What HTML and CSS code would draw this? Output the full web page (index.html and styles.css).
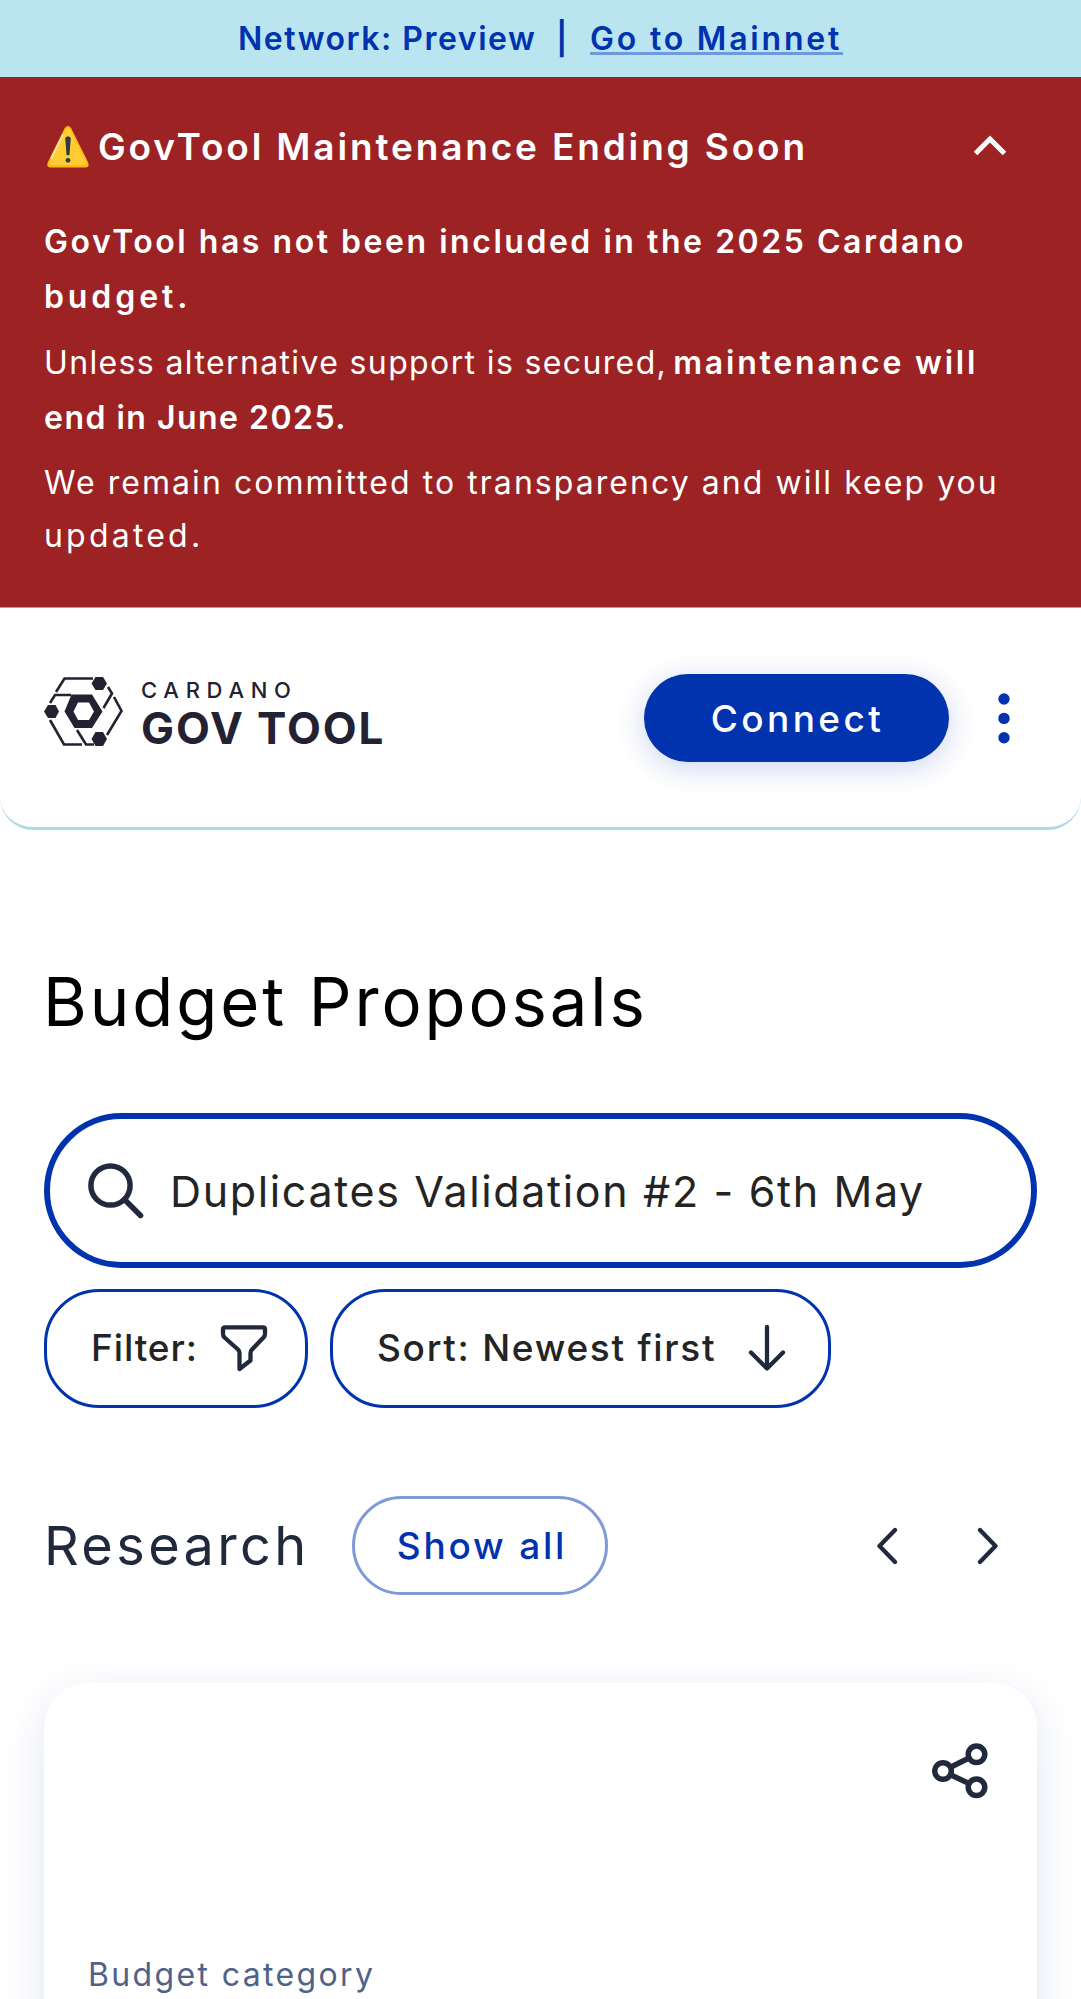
FILE: index.html
```html
<!DOCTYPE html>
<html lang="en">
<head>
<meta charset="utf-8">
<title>GovTool - Budget Proposals</title>
<link rel="stylesheet" href="styles.css">
</head>
<body>
<div class="page">
<div class="network"><span class="network-name">Network: Preview</span><span class="network-sep">|</span><a class="network-link">Go to Mainnet</a></div>
<section class="banner">
  <div class="banner-head">
    <svg class="warn" width="44" height="44" viewBox="0 0 44 44"><path d="M18.600 3.200Q22 -1.400 25.200 3.200L42.200 37.500Q43.800 42.500 39.500 42.500H4.500Q.200 42.500 1.700 37.500Z" fill="#fcb71b"/><path d="M19.600 4.500Q22 1.800 24.200 4.500L40 37Q41 40 38 40H6Q3 40 4 37Z" fill="#ffcd33"/><path d="M5.500 33L17 10" stroke="#ffe58a" stroke-width="2" stroke-linecap="round"/><path d="M19.200 13Q22 9.500 24.800 13L23.500 29.500Q22 31.500 20.500 29.500Z" fill="#2f3a40"/><circle cx="22" cy="35.300" r="2.400" fill="#2f3a40"/></svg>
    <h2 class="banner-title">GovTool Maintenance Ending Soon</h2>
    <svg class="collapse" width="34" height="22" viewBox="0 0 34 22"><path d="M2.500 18.500L17 4L31.500 18.500" fill="none" stroke="#fff" stroke-width="5"/></svg>
  </div>
  <p class="lead"><b class="lead-main">GovTool has not been included in the 2025 Cardano</b><br><b class="lead-end">budget.</b></p>
  <p class="lead"><span class="condition">Unless alternative support is secured,</span> <b class="outcome">maintenance will</b><br><b class="deadline">end in June 2025.</b></p>
  <p class="note">We remain committed to transparency and will keep you<br><span class="note-end">updated.</span></p>
</section>
<header class="header">
  <div class="logo">
    <svg width="79" height="69" viewBox="0 0 79 69" fill="none" stroke="#242232" stroke-width="2.600"><path d="M12 15L20.500 1.500H49M64 10L68 16.500L59.500 31M6 26L11 18H27M70 20L77.500 34L63 58M6 43L20 67.500H38M33 53L42 67.500H50"/><g fill="#242232" stroke="none"><path d="M27.500 17.500H48L58.500 34.500L48 51H30.500L20.500 34.500Z"/><path d="M51.500 0H59L63 6.500L59 13H51.500L47.500 6.500Z"/><path d="M4 28H11.500L15 34.500L11.500 41H4L0 34.500Z"/><path d="M51.500 55H59L63 62L59 69H51.500L47.500 62Z"/></g><path d="M34 25.500H45L50 34.500L45 43H34L29.500 34.500Z" fill="#fff" stroke="none"/></svg>
    <div class="wordmark"><span class="wordmark-top">CARDANO</span><span class="wordmark-main">GOV TOOL</span></div>
  </div>
  <div class="actions">
    <button class="connect">Connect</button>
    <svg width="12" height="51" viewBox="0 0 12 51" fill="#0033ad"><circle cx="6" cy="6" r="5.700"/><circle cx="6" cy="25.400" r="5.700"/><circle cx="6" cy="44.800" r="5.700"/></svg>
  </div>
</header>
<main class="main">
  <h1 class="title">Budget Proposals</h1>
  <div class="search">
    <svg width="56" height="56" viewBox="0 0 56 56" fill="none" stroke="#212a3d" stroke-width="5.500" stroke-linecap="round"><circle cx="22.500" cy="22.500" r="19.600"/><path d="M36.500 36.500L52.500 52.500"/></svg>
    <span>Duplicates Validation #2 - 6th May</span>
  </div>
  <div class="chips">
    <button class="chip filter"><span>Filter:</span>
      <svg width="48" height="48" viewBox="0 0 48 48" fill="none" stroke="#212a3d" stroke-width="4.300" stroke-linejoin="round"><path d="M5 3.300H43Q45 3.300 45 5.300V10Q45 12 43.500 13.500L32 25.500Q30.500 27 30.500 29V36.500L19.500 45V29Q19.500 27 18 25.500L4.500 13.500Q3 12 3 10V5.300Q3 3.300 5 3.300Z"/></svg></button>
    <button class="chip sort"><span>Sort: Newest first</span>
      <svg width="38" height="48" viewBox="0 0 38 48" fill="none" stroke="#212a3d" stroke-width="4.300" stroke-linecap="round" stroke-linejoin="round"><path d="M19 3V44.500M3 28.500L19 44.500L35 28.500"/></svg></button>
  </div>
  <div class="section-head">
    <h2 class="section-title">Research</h2>
    <button class="show-all">Show all</button>
    <div class="pager"><svg width="22" height="38" viewBox="0 0 22 38"><path d="M19 3L3.500 19L19 35"/></svg><svg width="22" height="38" viewBox="0 0 22 38"><path d="M3 3L18.500 19L3 35"/></svg></div>
  </div>
  <article class="card">
    <svg class="share" width="56" height="56" viewBox="0 0 56 56" fill="none" stroke="#212a3d" stroke-width="5.500"><circle cx="11" cy="28" r="8.300"/><circle cx="44.500" cy="11.300" r="8.300"/><circle cx="44.500" cy="44.300" r="8.300"/><path d="M18.500 24.300L37 15M18.500 31.700L37 40.500"/></svg>
    <span class="category">Budget category</span>
  </article>
</main>
</div>
</body>
</html>
```
FILE: styles.css
```css
* { box-sizing: border-box; }
body { margin: 0; background: #fff; font-family: Inter, "Open Sans", sans-serif; color: #212a3d; }
.page { width: 1081px; height: 1999px; overflow: hidden; }
h1, h2, p { margin: 0; font-weight: 400; }
button { font: inherit; margin: 0; padding: 0; background: none; display: flex; align-items: center; }
svg { display: block; flex: none; }
b { font-weight: 600; }

.network { height: 77px; display: flex; align-items: center; padding-left: 238px; background: #bbe4f1; color: #0033ad; font-size: 32px; font-weight: 600; }
.network-name { width: 318px; white-space: nowrap; letter-spacing: 1.52px; }
.network-sep { width: 34px; }
.network-link { width: 253px; line-height: 27px; margin-top: 3px; white-space: nowrap; letter-spacing: 2.8px; border-bottom: 3px solid #6f99dc; }

.banner { height: 531px; padding: 42px 44px 0; background: #9c2224; color: #fff; font-size: 32px; white-space: nowrap; border-bottom: 1px solid #cf8e8f; }
.banner-head { height: 55px; display: flex; align-items: center; margin-bottom: 40px; }
.warn { margin-left: 2px; }
.banner-title { flex: 1; margin-left: 8px; font-size: 37px; line-height: 55px; font-weight: 600; letter-spacing: 2.84px; }
.collapse { margin: -2px 30px 0 0; }
.lead { line-height: 55px; margin-bottom: 11px; }
.lead-main { letter-spacing: 2.53px; }
.lead-end { letter-spacing: 3.9px; }
.condition { letter-spacing: 1.37px; }
.outcome { margin-left: -3px; letter-spacing: 2.8px; }
.deadline { letter-spacing: 1.48px; }
.note { padding-top: 1px; line-height: 52.5px; letter-spacing: 2.05px; }
.note-end { letter-spacing: 3.2px; }

.header { height: 222px; display: flex; justify-content: space-between; align-items: flex-start; padding: 66px 71px 0 44px; border-bottom: 3px solid #add8e6; border-radius: 0 0 33px 33px; }
.logo { display: flex; margin-top: 3px; color: #242232; }
.wordmark { display: flex; flex-direction: column; gap: 5px; margin: 2px 0 0 18px; white-space: nowrap; }
.wordmark-top { font-size: 22px; line-height: 22px; font-weight: 500; letter-spacing: 6.7px; }
.wordmark-main { font-size: 44px; line-height: 44px; font-weight: 700; letter-spacing: 1.9px; }
.actions { display: flex; align-items: center; gap: 49px; }
.connect { width: 305px; height: 88px; padding-left: 2px; justify-content: center; border: 0; border-radius: 44px; background: #0033ad; color: #fff; font-size: 37px; font-weight: 500; letter-spacing: 3.4px; box-shadow: 0 6px 30px rgba(0, 51, 173, .2); }

.main { padding: 132px 44px 0; white-space: nowrap; }
.title { margin-left: -1px; color: #000; font-size: 67px; line-height: 80px; letter-spacing: 2.9px; }
.search { height: 155px; display: flex; align-items: center; gap: 26px; margin-top: 71px; padding-left: 38px; border: 6px solid #0033ad; border-radius: 78px; color: #242424; font-size: 43px; letter-spacing: 1.64px; }
.chips { display: flex; gap: 22px; margin-top: 21px; }
.chip { height: 119px; justify-content: space-between; padding: 0 37px 2px 44px; border: 3px solid #0033ad; border-radius: 55px; color: #242424; font-size: 37px; font-weight: 500; }
.filter { width: 264px; letter-spacing: .9px; }
.sort { width: 501px; padding-right: 42px; letter-spacing: 1.71px; }
.section-head { height: 99px; display: flex; align-items: center; margin-top: 88px; }
.section-title { width: 308px; font-size: 54px; letter-spacing: 3.4px; }
.show-all { width: 256px; height: 99px; padding-left: 4px; justify-content: center; border: 3px solid #809ad8; border-radius: 50px; color: #0033ad; font-size: 37px; font-weight: 500; letter-spacing: 2.8px; }
.pager { display: flex; gap: 79px; margin-left: auto; padding-right: 38px; }
.pager path { fill: none; stroke: #212a3d; stroke-width: 4.3; stroke-linecap: round; stroke-linejoin: round; }
.card { height: 400px; display: flex; flex-direction: column; margin-top: 88px; padding: 60px 49px 0 44px; background: #fff; border-radius: 44px; box-shadow: 0 11px 41px rgba(0, 51, 173, .12); }
.share { align-self: flex-end; }
.category { margin-top: 156px; font-size: 32px; line-height: 40px; letter-spacing: 2.36px; color: #506288; }
```
